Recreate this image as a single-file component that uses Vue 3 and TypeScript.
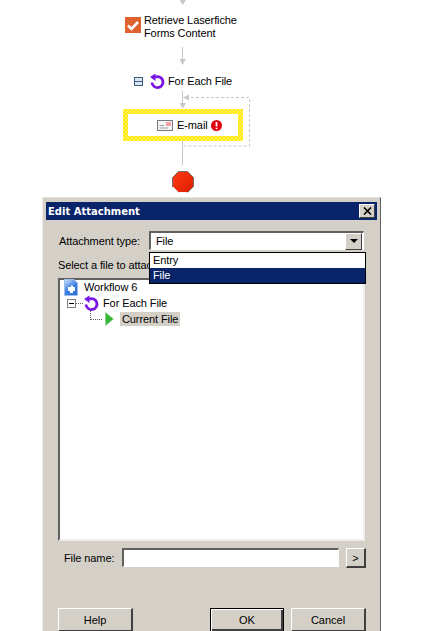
<script setup lang="ts">
import { ref } from 'vue';

const attachmentType = ref('File');
const options = ['Entry', 'File'];
</script>

<template>
  <div class="page">
    <section class="canvas">
      <svg class="wires" width="443" height="197" viewBox="0 0 443 197">
        <g fill="none" stroke="#c8c8c8" stroke-width="1">
          <path d="M182.5 0V3" />
          <path d="M182.5 47V60" />
          <path d="M182.5 91V104" />
          <path d="M182.5 141V165" />
        </g>
        <path d="M186 97.5H249.5V146H183" fill="none" stroke="#c8c8c8" stroke-dasharray="3 2" />
        <g fill="#c8c8c8">
          <path d="M179.5 0H186L182.7 5Z" />
          <path d="M179.5 59H186L182.7 65Z" />
          <path d="M179.5 103H186L182.7 108.500Z" />
          <path d="M183 97.500L189 94.500V100.500Z" />
        </g>
      </svg>

      <div class="node node-retrieve">
        <svg class="check-icon" width="16" height="16" viewBox="0 0 16 16">
          <rect width="16" height="16" fill="#e0622f" />
          <path d="M3 8.500L6.500 12L13 5" fill="none" stroke="#fff" stroke-width="2.600" />
        </svg>
        <span>Retrieve Laserfiche<br />Forms Content</span>
      </div>

      <div class="node node-foreach">
        <span class="collapse-box"></span>
        <svg width="17" height="17" viewBox="0 0 17 17">
          <path d="M6 4.200A5.500 5.500 0 1 1 3 9.500" fill="none" stroke="#7a14e6" stroke-width="2.800" />
          <path d="M6.500 0.500L1 4L6.500 8Z" fill="#7a14e6" />
        </svg>
        <span>For Each File</span>
      </div>

      <div class="node-selected">
        <div class="selected-inner">
          <svg width="16" height="11" viewBox="0 0 16 11">
            <rect x="0.500" y="0.500" width="15" height="10" fill="#f4f4f4" stroke="#77777f" />
            <rect x="9" y="2" width="5" height="4" fill="#f2a0a8" />
            <path d="M2.500 5.500H7M2.500 8H11" stroke="#a0a0a0" />
          </svg>
          <span class="mail-label">E-mail</span>
          <svg width="11" height="11" viewBox="0 0 11 11">
            <circle cx="5.500" cy="5.500" r="5.500" fill="#e0000f" />
            <path d="M5.500 2V6.500M5.500 7.800V9.200" stroke="#fff" stroke-width="1.800" />
          </svg>
        </div>
      </div>

      <svg class="stop" width="24" height="24" viewBox="0 0 24 24">
        <defs>
          <linearGradient id="stopFill" x1="0" y1="0" x2="1" y2="1">
            <stop offset="0" stop-color="#ff3c14" />
            <stop offset="1" stop-color="#dc1c00" />
          </linearGradient>
        </defs>
        <path d="M7.500 1.500H16.500L22.500 7.500V16.500L16.500 22.500H7.500L1.500 16.500V7.500Z" fill="url(#stopFill)" stroke="#707070" />
        <path d="M2 17L7.500 22.500H16.500" fill="none" stroke="#f4f4f4" />
      </svg>
    </section>

    <section class="dialog">
      <header class="titlebar">
        <span>Edit Attachment</span>
        <button class="close-btn">
          <svg width="9" height="8" viewBox="0 0 9 8">
            <path d="M1 0.500L8 7.500M8 0.500L1 7.500" stroke="#000" stroke-width="1.600" />
          </svg>
        </button>
      </header>

      <div class="dialog-body">
        <div class="type-row">
          <label class="type-label">Attachment type:</label>
          <div class="combo">
            <span class="combo-value">{{ attachmentType }}</span>
            <span class="combo-arrow"><i></i></span>
            <ul class="combo-list">
              <li v-for="option in options" :key="option" :class="{ active: option === attachmentType }">
                {{ option }}
              </li>
            </ul>
          </div>
        </div>

        <p class="select-label">Select a file to attach:</p>

        <div class="tree">
          <div class="tree-row row-workflow">
            <svg width="14" height="17" viewBox="0 0 14 17">
              <defs>
                <linearGradient id="docFill" x1="0" y1="0" x2="0.600" y2="1">
                  <stop offset="0" stop-color="#d4e4fa" />
                  <stop offset="0.600" stop-color="#3f7fe0" />
                  <stop offset="1" stop-color="#2f6fd8" />
                </linearGradient>
              </defs>
              <path d="M0.500 0.500H10L13.500 4V16.500H0.500Z" fill="url(#docFill)" stroke="#9cc0ee" />
              <path d="M4 8H7V6.500H9V8H11V12H9V14H6V12H4Z" fill="#fff" />
            </svg>
            <span>Workflow 6</span>
          </div>
          <div class="tree-row row-foreach">
            <span class="tree-box"></span>
            <span class="dots-h"></span>
            <svg width="17" height="17" viewBox="0 0 17 17">
              <path d="M6 4.200A5.500 5.500 0 1 1 3 9.500" fill="none" stroke="#7a14e6" stroke-width="2.800" />
              <path d="M6.500 0.500L1 4L6.500 8Z" fill="#7a14e6" />
            </svg>
            <span>For Each File</span>
          </div>
          <div class="tree-row row-current">
            <span class="dots-corner"></span>
            <svg width="9" height="14" viewBox="0 0 9 14">
              <path d="M0.500 0.500L8.500 7L0.500 13.500Z" fill="#35b835" stroke="#8fd08f" />
            </svg>
            <span class="current-file">Current File</span>
          </div>
        </div>

        <div class="name-row">
          <label class="name-label">File name:</label>
          <input class="name-input" type="text" />
          <button class="more-btn">&gt;</button>
        </div>

        <footer class="actions">
          <button class="btn">Help</button>
          <span class="spacer"></span>
          <button class="btn btn-default">OK</button>
          <button class="btn">Cancel</button>
        </footer>
      </div>
    </section>
  </div>
</template>

<style>
html,
body {
  margin: 0;
  height: 631px;
  overflow: hidden;
  background: #fff;
}
</style>

<style scoped>
.page {
  width: 443px;
  height: 631px;
  overflow: hidden;
  font-family: "Liberation Sans", Arial, sans-serif;
  font-size: 11px;
  letter-spacing: -0.1px;
  color: #000;
}

.canvas {
  position: relative;
  height: 197px;
}

.wires {
  position: absolute;
  left: 0;
  top: 0;
}

.node {
  position: absolute;
  display: flex;
  align-items: center;
  line-height: 13px;
}

.node-retrieve {
  left: 125px;
  top: 14px;
  gap: 3px;
  align-items: flex-start;
}

.check-icon {
  margin-top: 3px;
}

.node-foreach {
  left: 134px;
  top: 73px;
  gap: 2px;
}

.collapse-box {
  width: 7px;
  height: 7px;
  margin-right: 4px;
  border: 1px solid #3d5c80;
  background: linear-gradient(transparent 3px, #3d5c80 3px, #3d5c80 4px, transparent 4px), #dce6f0;
}

.node-selected {
  position: absolute;
  left: 123px;
  top: 109px;
  width: 120px;
  height: 32px;
  box-sizing: border-box;
  padding: 5px;
  background: repeating-conic-gradient(#ffe900 0 25%, #fff35a 0 50%) 0 0 / 4px 4px;
}

.selected-inner {
  height: 100%;
  padding-left: 29px;
  display: flex;
  align-items: center;
  background: #fff;
}

.mail-label {
  width: 34px;
  margin-left: 4px;
}

.stop {
  position: absolute;
  left: 171px;
  top: 170px;
}

.dialog {
  box-sizing: border-box;
  width: 339px;
  margin-left: 42px;
  padding: 0 3px;
  border-top: 1px solid #e4e2dc;
  border-left: 1px solid #eeede9;
  border-right: 1px solid #5f5f5f;
  background: #d4d0c8;
}

.titlebar {
  display: flex;
  align-items: center;
  justify-content: space-between;
  height: 18px;
  padding: 0 2px;
  border-top: 4px solid #d4d0c8;
  background: #0a246a;
  background-clip: padding-box;
  color: #fff;
  font-family: "DejaVu Sans", sans-serif;
  font-size: 10px;
  font-weight: bold;
  letter-spacing: 0;
}

.close-btn {
  display: flex;
  align-items: center;
  justify-content: center;
  width: 16px;
  height: 14px;
  padding: 0;
  border: 1px solid;
  border-color: #fff #404040 #404040 #fff;
  background: #d4d0c8;
}

.dialog-body {
  padding: 11px 11px 0 12px;
}

.type-row {
  display: flex;
  align-items: center;
  height: 19px;
}

.type-label {
  width: 91px;
  padding-left: 1px;
  box-sizing: border-box;
}

.combo {
  position: relative;
  display: flex;
  align-items: center;
  justify-content: space-between;
  box-sizing: border-box;
  width: 215px;
  height: 19px;
  padding-left: 5px;
  border: 1px solid;
  border-width: 2px 1px 1px 2px;
  border-color: #606060 #fff #fff #606060;
  background: #fff;
}

.combo-arrow {
  display: flex;
  align-items: center;
  justify-content: center;
  width: 15px;
  height: 15px;
  margin-right: 1px;
  border: 1px solid;
  border-color: #fff #404040 #404040 #fff;
  background: #d4d0c8;
}

.combo-arrow i {
  border-top: 4px solid #000;
  border-left: 4px solid transparent;
  border-right: 4px solid transparent;
}

.combo-list {
  position: absolute;
  z-index: 2;
  left: -2px;
  top: 19px;
  width: 215px;
  margin: 0;
  padding: 0;
  list-style: none;
  border: 1px solid #000;
  background: #fff;
}

.combo-list li {
  height: 15px;
  padding-left: 3px;
  line-height: 15px;
}

.combo-list li.active {
  background: #0a246a;
  color: #fff;
}

.select-label {
  margin: 8px 0 0;
  height: 20px;
  line-height: 14px;
}

.tree {
  box-sizing: border-box;
  position: relative;
  width: 307px;
  height: 263px;
  border: 2px solid;
  border-color: #606060 #eeede9 #eeede9 #606060;
  background: #fff;
}

.tree-row {
  display: flex;
  align-items: center;
  height: 16px;
}

.row-workflow {
  margin-top: -1px;
  gap: 6px;
  padding-left: 4px;
}

.row-foreach {
  padding-left: 7px;
}

.row-foreach svg {
  margin-right: 3px;
}

.tree-box {
  box-sizing: border-box;
  width: 9px;
  height: 9px;
  border: 1px solid #808080;
  background: linear-gradient(transparent 3px, #000 3px, #000 4px, transparent 4px) center / 5px 7px no-repeat, #fff;
}

.dots-h {
  width: 7px;
  border-top: 1px dotted #606060;
}

.row-current {
  padding-left: 30px;
}

.dots-corner {
  width: 11px;
  height: 8px;
  margin: 0 3px 8px 0;
  border-left: 1px dotted #606060;
  border-bottom: 1px dotted #606060;
}

.current-file {
  margin-left: 6px;
  padding: 1px 2px;
  background: #d4d0c8;
  white-space: nowrap;
}

.name-row {
  display: flex;
  align-items: flex-start;
  height: 20px;
  margin-top: 7px;
}

.name-label {
  width: 64px;
  padding: 4px 0 0 6px;
  box-sizing: border-box;
  white-space: nowrap;
}

.name-input {
  box-sizing: border-box;
  width: 217px;
  height: 19px;
  margin-right: 7px;
  padding: 0;
  border: 1px solid;
  border-width: 2px 1px 1px 2px;
  border-color: #606060 #fff #fff #606060;
  background: #fff;
  border-radius: 0;
  outline: none;
}

.more-btn {
  width: 20px;
  height: 20px;
  padding: 0;
  border: 1px solid;
  border-width: 1px 2px 2px 1px;
  border-color: #fff #404040 #404040 #fff;
  background: #d4d0c8;
  font: 11px "Liberation Sans", Arial, sans-serif;
}

.actions {
  display: flex;
  margin-top: 40px;
  gap: 7px;
}

.spacer {
  flex: none;
  width: 63px;
}

.btn {
  flex: none;
  box-sizing: border-box;
  width: 75px;
  height: 24px;
  padding: 0;
  border: 1px solid;
  border-width: 1px 2px 2px 1px;
  border-color: #fff #404040 #404040 #fff;
  background: #d4d0c8;
  color: #000;
  font: 11px "Liberation Sans", Arial, sans-serif;
}

.btn-default {
  width: 74px;
  border: 1px solid #000;
  box-shadow: inset 1px 1px #fff, inset -2px -2px #404040;
}
</style>
